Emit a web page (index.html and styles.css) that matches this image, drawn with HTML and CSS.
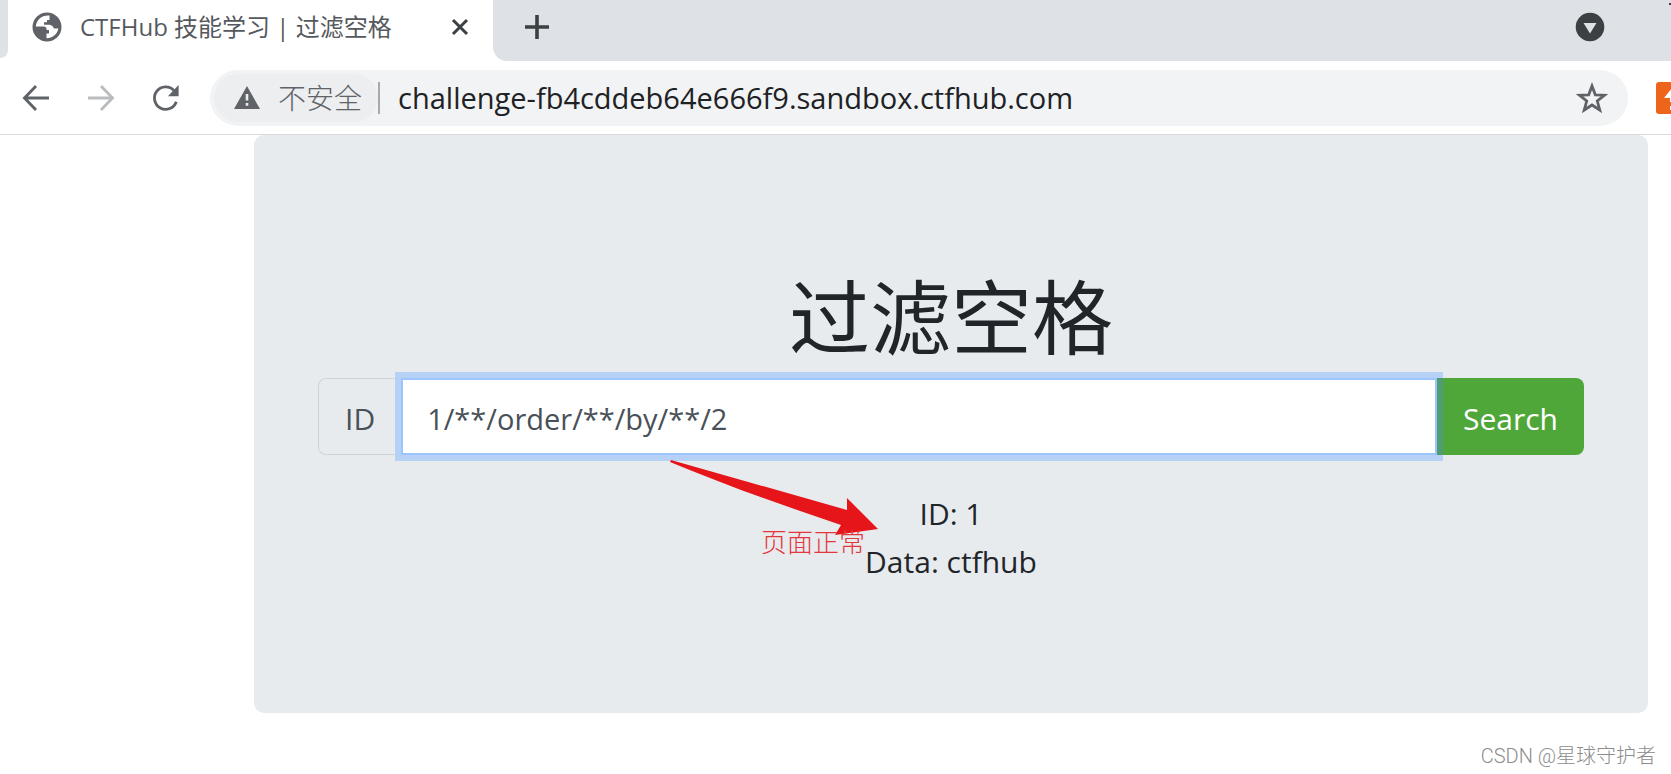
FILE: index.html
```html
<!DOCTYPE html>
<html lang="zh-CN">
<head>
<meta charset="utf-8">
<title>CTFHub 技能学习 | 过滤空格</title>
<link rel="stylesheet" href="styles.css">
</head>
<body>
<header class="browser">
  <div class="tab-strip">
    <div class="tab-previous"></div>
    <div class="tab">
      <svg class="favicon" viewBox="0 0 30 30" aria-hidden="true">
        <circle cx="15" cy="15" r="14.500" fill="#5f6368"/>
        <path fill="#fff" d="M17.500 3.500C10 2.800 4.500 7.500 3.800 14.500H11.500C14 14.500 14.700 16 14.700 18H17V21.500H14.500V26.300C21 26 25.500 22 26.300 16.500H22C21 14.500 20 12.800 16 12.800H12V10.300H15V8H17.500Z"/>
      </svg>
      <span class="tab-title">CTFHub 技能学习 | 过滤空格</span>
      <button class="icon-button tab-close" aria-label="Close tab"><svg width="18" height="18" viewBox="0 0 18 18"><path d="M2 2L16 16M16 2L2 16" stroke="#3c4043" stroke-width="3"/></svg></button>
    </div>
    <div class="strip-rest">
      <button class="icon-button" aria-label="New tab"><svg width="26" height="26" viewBox="0 0 26 26"><path d="M13 1V25M1 13H25" stroke="#3c4043" stroke-width="3.6"/></svg></button>
      <button class="icon-button" aria-label="Search tabs"><svg width="30" height="30" viewBox="0 0 30 30"><circle cx="15" cy="15" r="14.300" fill="#3c4043"/><path d="M8.500 11H21.500L15 21.500Z" fill="#dee1e6"/></svg></button>
    </div>
    <span class="window-control"></span>
  </div>
  <div class="toolbar">
    <nav class="nav-buttons" aria-label="Navigation">
      <button class="icon-button" aria-label="Back"><svg width="28" height="28" viewBox="0 0 28 28"><path d="M27 14H3M14 2L2.500 14L14 26" fill="none" stroke="#5f6368" stroke-width="2.900"/></svg></button>
      <button class="icon-button" aria-label="Forward"><svg width="28" height="28" viewBox="0 0 28 28"><path d="M1 14H25M14 2L25.500 14L14 26" fill="none" stroke="#babcbe" stroke-width="2.900"/></svg></button>
      <button class="icon-button" aria-label="Reload"><svg width="28" height="28" viewBox="0 0 30 30"><path d="M26 19A12 12 0 1 1 23.500 7" fill="none" stroke="#5f6368" stroke-width="3"/><path d="M28.500 1V13H17Z" fill="#5f6368"/></svg></button>
    </nav>
    <div class="omnibox">
      <button class="security"><svg width="26" height="24" viewBox="0 0 26 24" aria-hidden="true"><path d="M13 0L26 23H0Z" fill="#5f6368"/><path d="M11.700 8H14.300V14.500H11.700ZM11.700 17H14.300V19.800H11.700Z" fill="#eceef0"/></svg><span>不安全</span></button>
      <input class="address" aria-label="Address" value="challenge-fb4cddeb64e666f9.sandbox.ctfhub.com">
      <button class="icon-button" aria-label="Bookmark"><svg width="32" height="32" viewBox="0 0 32 32"><path d="M16 4L19.300 12.800L28.500 13.200L21.300 19L23.800 28L16 23L8.200 28L10.700 19L3.500 13.200L12.700 12.800Z" fill="none" stroke="#5f6368" stroke-width="2.800"/></svg></button>
    </div>
    <button class="icon-button extension" aria-label="Extension"><svg width="32" height="32" viewBox="0 0 32 32"><rect width="32" height="32" rx="3" fill="#ee641b"/><path d="M8 16L16 6L24 16H18V20H14V16ZM14 24H18V28H14Z" fill="#fff"/></svg></button>
  </div>
</header>
<main class="page">
  <section class="panel">
    <h1 class="heading">过滤空格</h1>
    <form class="query">
      <label class="query-label" for="query-id">ID</label>
      <input class="query-input" id="query-id" type="text" value="1/**/order/**/by/**/2">
      <button class="query-submit" type="button">Search</button>
    </form>
    <div class="result">
      <p>ID: 1</p>
      <p>Data: ctfhub</p>
      <div class="note">
        <svg width="210" height="78" viewBox="0 0 210 78" aria-hidden="true"><path d="M1 0L177 50L177 38L208 69L165 75L171 65C115 46 60 27 0 2Z" fill="#e6151a"/></svg>
        <span class="note-text">页面正常</span>
      </div>
    </div>
  </section>
</main>
<footer class="watermark">CSDN @星球守护者</footer>
</body>
</html>
```
FILE: styles.css
```css
* {
  box-sizing: border-box;
}

body {
  margin: 0;
  min-height: 100vh;
  display: flex;
  flex-direction: column;
  overflow-x: hidden;
  background: #fff;
  color: #212529;
  font-family: "Open Sans", "Noto Sans CJK SC", sans-serif;
}

button,
input {
  font: inherit;
  color: inherit;
}

svg {
  display: block;
}

.icon-button {
  flex: none;
  padding: 0;
  border: 0;
  background: none;
}

.tab-strip {
  position: relative;
  display: flex;
  height: 61px;
  background: #fff;
}

.tab-previous {
  width: 8px;
  height: 58px;
  background: #dee1e6;
  border-bottom-right-radius: 12px;
}

.tab {
  display: flex;
  align-items: center;
  width: 485px;
  padding: 0 24px 8px;
}

.favicon {
  width: 30px;
  height: 30px;
}

.tab-title {
  flex: 1;
  margin-left: 18px;
  color: #55595e;
  font-size: 24px;
  line-height: 32px;
  white-space: nowrap;
}

.strip-rest {
  flex: 1;
  display: flex;
  align-items: center;
  justify-content: space-between;
  padding: 0 66px 8px 31px;
  background: #dee1e6;
  border-bottom-left-radius: 14px;
}

.window-control {
  position: absolute;
  top: 3px;
  right: 0;
  width: 2px;
  height: 2px;
  background: #3c4043;
}

.toolbar {
  display: flex;
  align-items: center;
  height: 74px;
  padding-left: 22px;
  border-bottom: 1px solid #d9dbdf;
  overflow: hidden;
}

.nav-buttons {
  display: flex;
  align-items: center;
  gap: 37px;
}

.omnibox {
  flex: 1;
  display: flex;
  align-items: center;
  height: 56px;
  margin-left: 30px;
  padding: 4px 20px 4px 4px;
  border-radius: 28px;
  background: #f1f3f4;
}

.security {
  display: flex;
  align-items: center;
  gap: 18px;
  height: 48px;
  padding: 0 16px 0 20px;
  border: 0;
  border-radius: 24px;
  background: #eceef0;
  color: #5f6368;
  font-size: 28px;
  font-weight: 300;
  line-height: 40px;
}

.address {
  flex: 1;
  min-width: 0;
  height: 48px;
  padding: 0 0 0 20px;
  border: 0;
  background: linear-gradient(#a6a9ad, #a6a9ad) left center / 2px 32px no-repeat;
  color: #202124;
  font-size: 29px;
  outline: 0;
}

.extension {
  width: 32px;
  margin: 0 -17px 0 28px;
}

.page {
  padding: 0 23px 0 254px;
}

.panel {
  padding: 134px 64px 127px;
  border-radius: 10px;
  background: #e8ebee;
  text-align: center;
}

.heading {
  margin: 0 0 13px;
  font-size: 81px;
  font-weight: 400;
  line-height: 96px;
}

.query {
  display: flex;
  height: 77px;
  font-size: 30px;
}

.query-label {
  display: flex;
  align-items: center;
  padding: 4px 26px 0;
  border: 1px solid #ced4da;
  border-right: 0;
  border-radius: 8px 0 0 8px;
  color: #495057;
}

.query-input {
  flex: 1;
  min-width: 0;
  padding: 4px 24px 0;
  border: 2px solid #9cc4ff;
  background: #fff;
  color: #495057;
  font-size: 29px;
  outline: 0;
  box-shadow: 0 0 0 6px #b6d0f6;
}

.query-submit {
  position: relative;
  padding: 4px 26px 0;
  border: 0;
  border-radius: 0 8px 8px 0;
  background: #50a739;
  box-shadow: inset 6px 0 #509d75;
  color: #fff;
}

.result {
  position: relative;
  margin-top: 35px;
  font-size: 30px;
  line-height: 48px;
}

.result p {
  margin: 0;
}

.note {
  position: absolute;
  top: -30px;
  left: 352px;
}

.note-text {
  position: absolute;
  top: 65px;
  left: 91px;
  color: #e2373d;
  font-family: "Noto Sans CJK SC", sans-serif;
  font-size: 26px;
  font-weight: 300;
  line-height: 32px;
  white-space: nowrap;
}

.watermark {
  margin-top: auto;
  padding: 0 15px 4px 0;
  color: #8c8c8c;
  font-family: Roboto, "Noto Sans CJK SC", sans-serif;
  font-size: 20px;
  font-weight: 300;
  line-height: 28px;
  text-align: right;
}
```
